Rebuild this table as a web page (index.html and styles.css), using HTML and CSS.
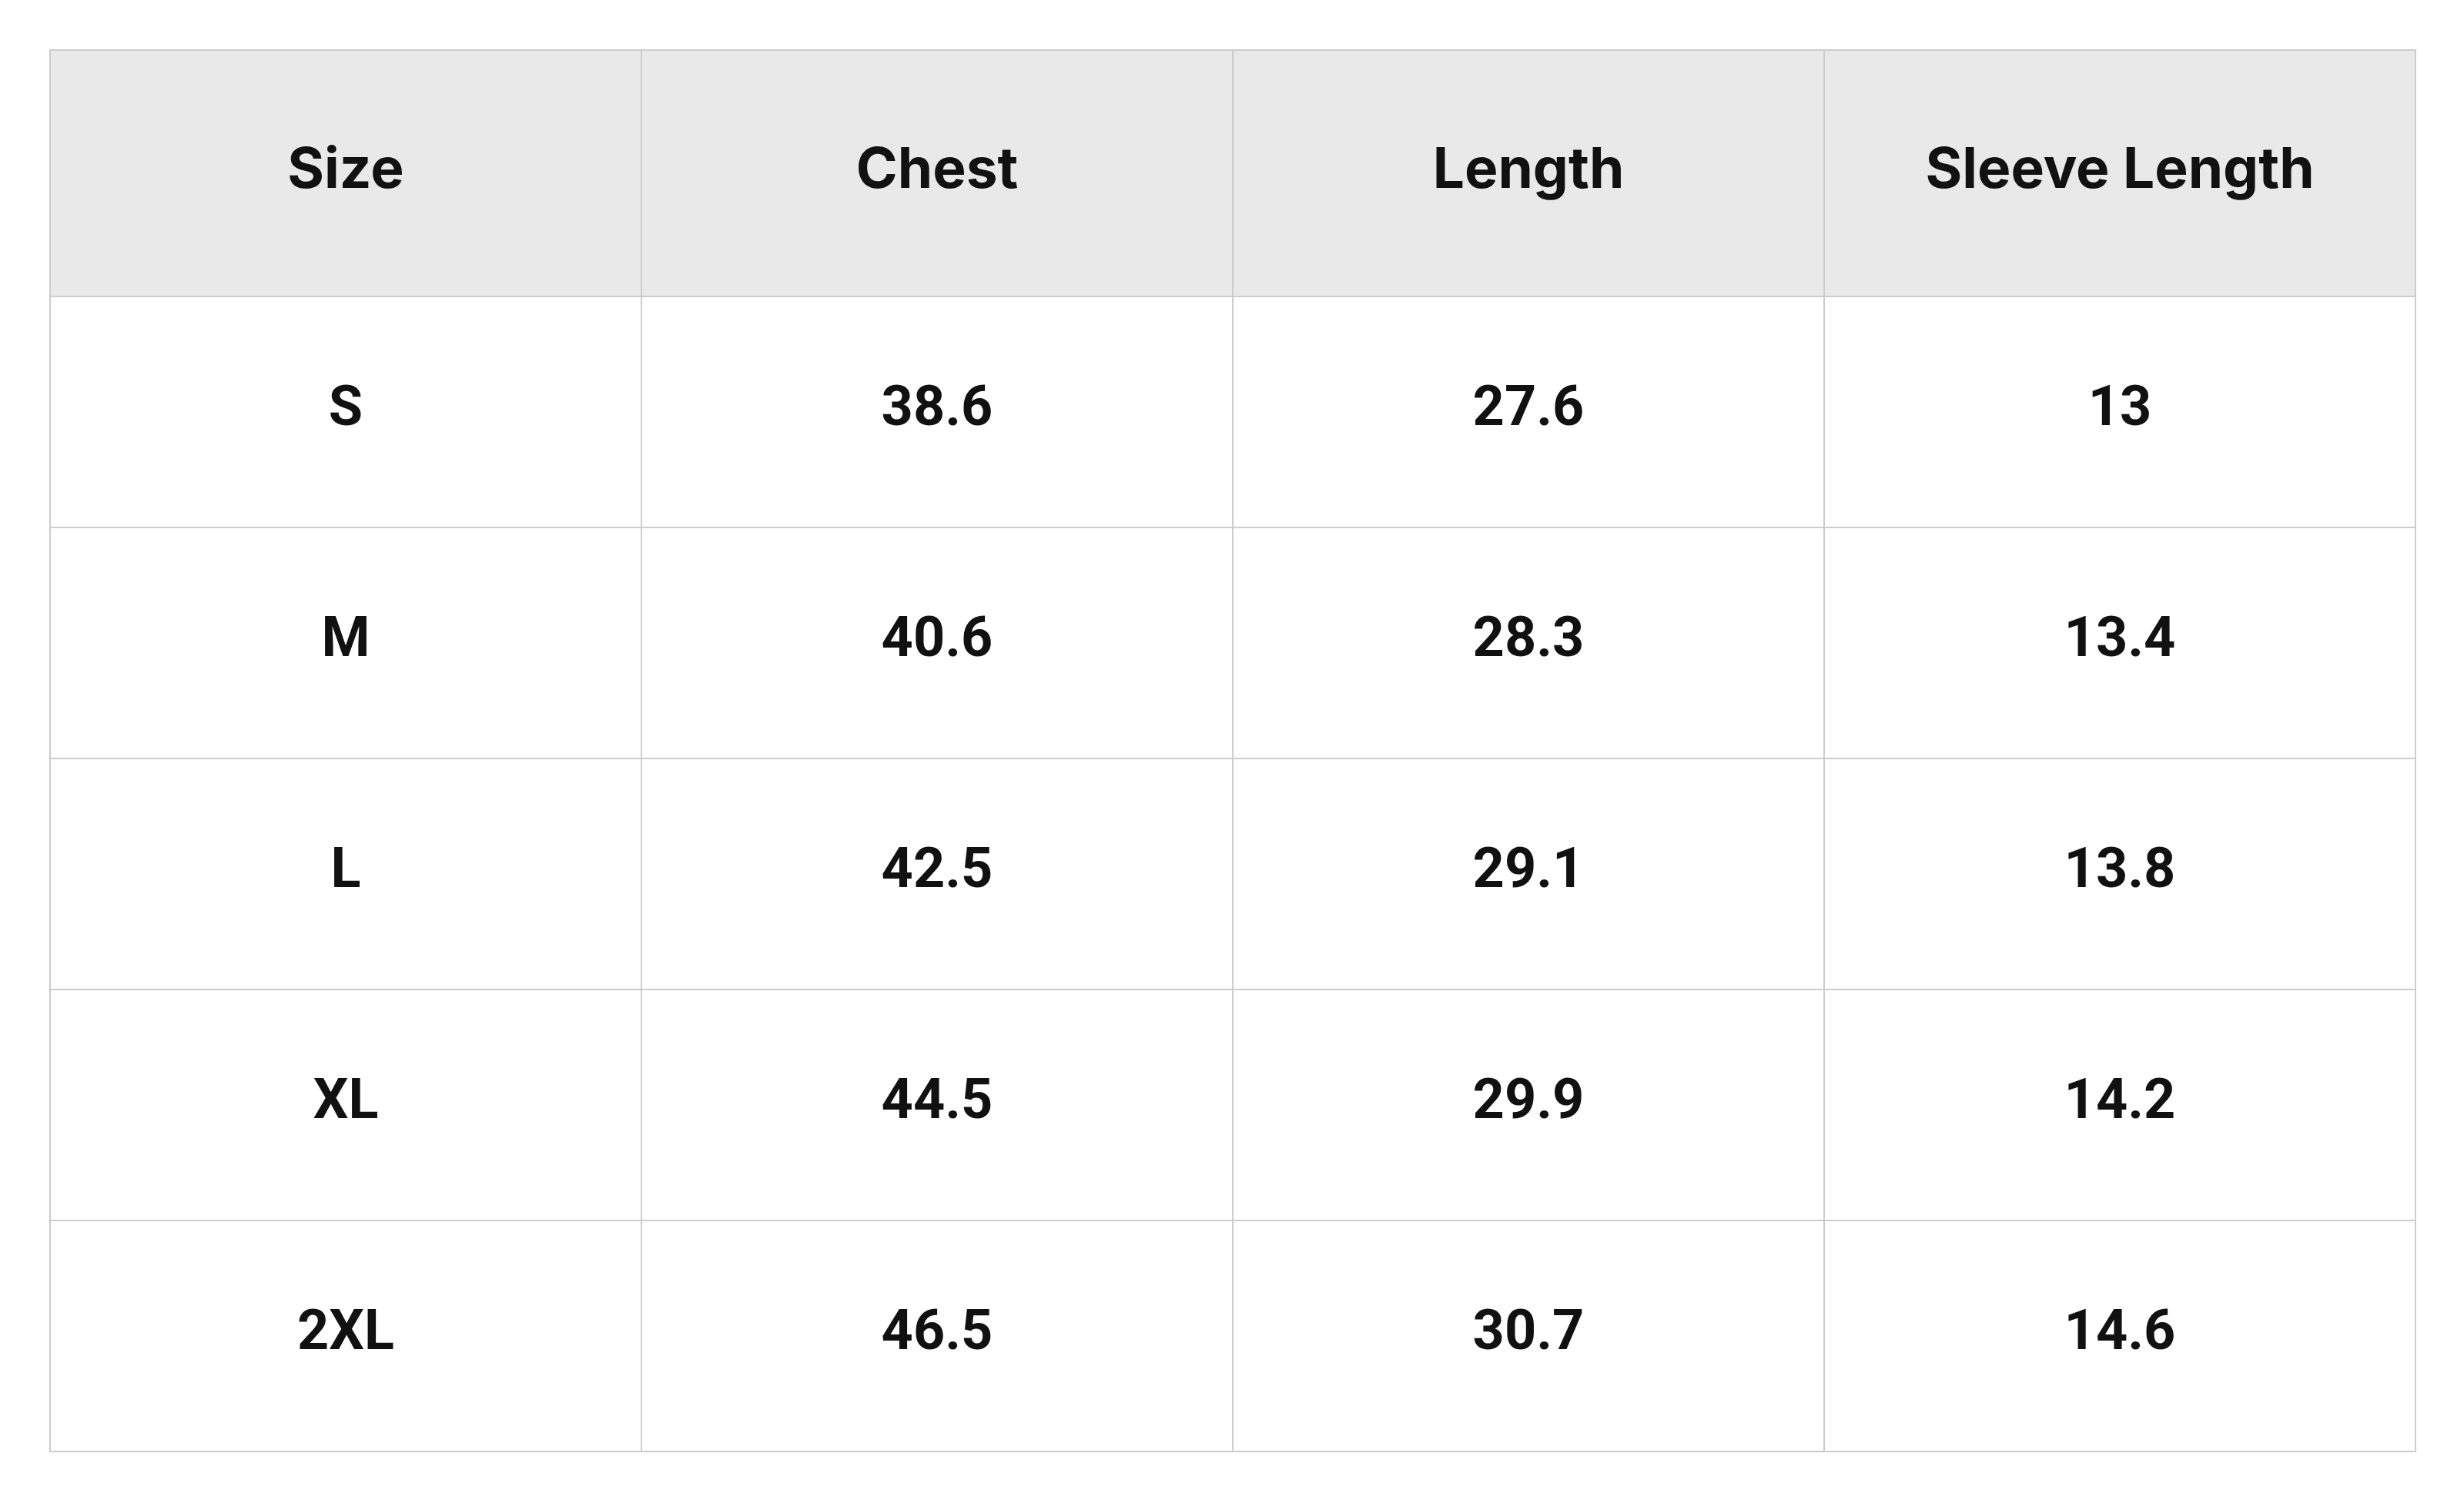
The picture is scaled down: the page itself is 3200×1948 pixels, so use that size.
FILE: index.html
```html
<!DOCTYPE html>
<html>
<head>
<meta charset="utf-8">
<link rel="stylesheet" href="styles.css">
</head>
<body>
<table class="size-table">
  <thead>
    <tr><th>Size</th><th>Chest</th><th>Length</th><th>Sleeve Length</th></tr>
  </thead>
  <tbody>
    <tr><td>S</td><td>38.6</td><td>27.6</td><td>13</td></tr>
    <tr><td>M</td><td>40.6</td><td>28.3</td><td>13.4</td></tr>
    <tr><td>L</td><td>42.5</td><td>29.1</td><td>13.8</td></tr>
    <tr><td>XL</td><td>44.5</td><td>29.9</td><td>14.2</td></tr>
    <tr><td>2XL</td><td>46.5</td><td>30.7</td><td>14.6</td></tr>
  </tbody>
</table>
</body>
</html>
```

FILE: styles.css
```css
html, body {
  margin: 0;
  background: #ffffff;
}
body {
  padding: 64px;
  font-family: Inter, "Noto Sans", sans-serif;
  color: #111111;
}
.size-table {
  width: 3074px;
  border-collapse: collapse;
  table-layout: fixed;
}
.size-table th,
.size-table td {
  border: 2px solid #cccccc;
  text-align: center;
  vertical-align: middle;
  font-weight: 700;
  padding: 0 0 14px 0;
  line-height: 1.2;
}
.size-table th {
  background: #e9e9e9;
  height: 304px;
  font-size: 73px;
}
.size-table td {
  height: 284px;
  font-family: Roboto, Inter, sans-serif;
  font-size: 72px;
}
```
